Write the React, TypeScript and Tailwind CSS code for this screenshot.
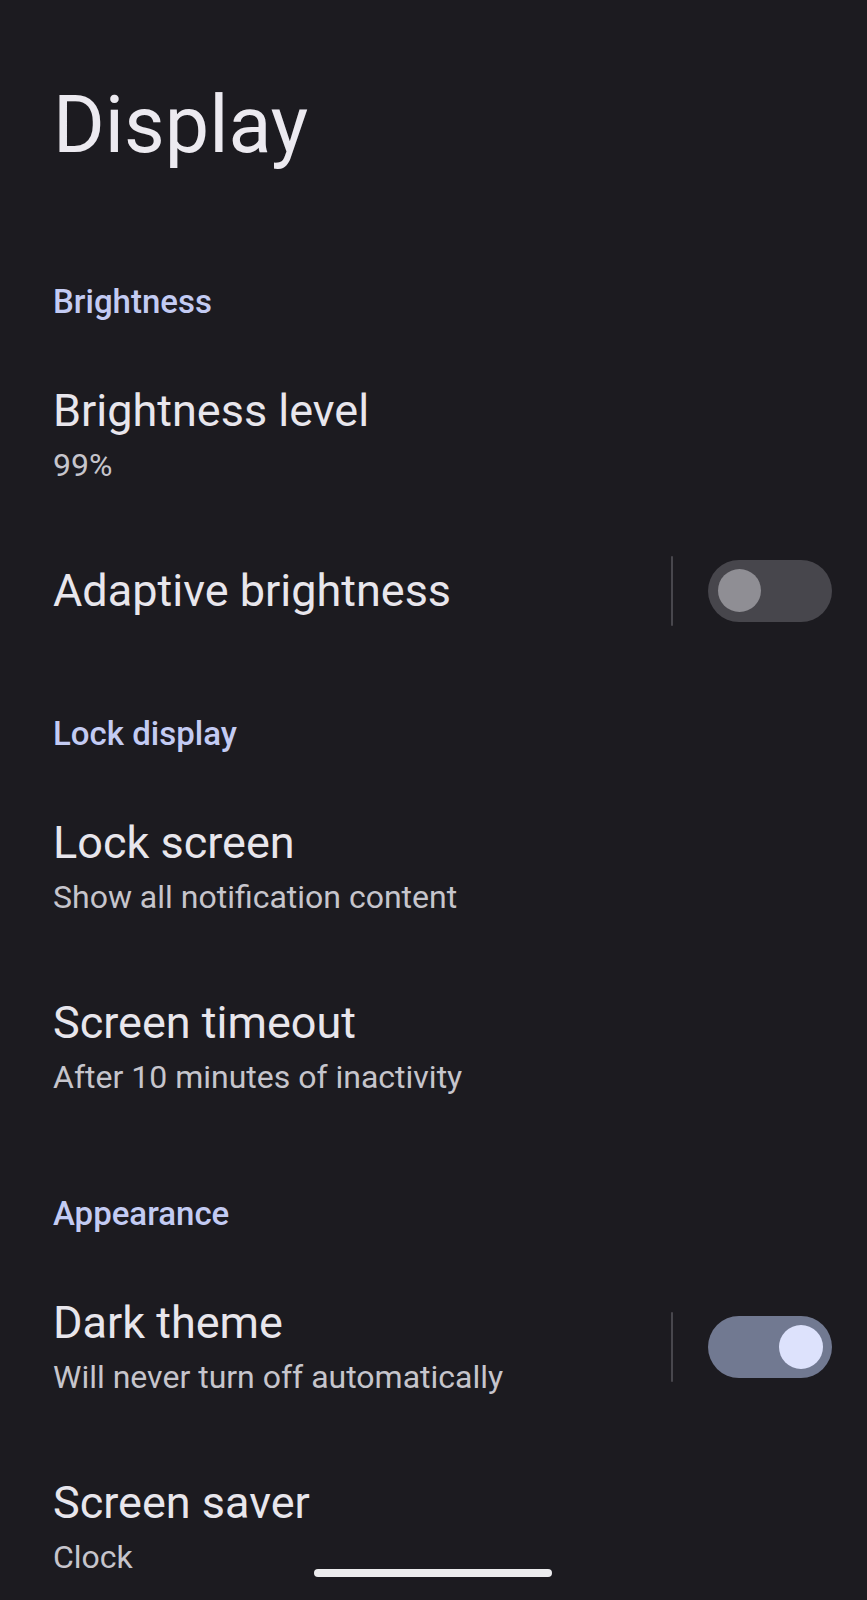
import React from "react";

const font = { fontFamily: "Roboto, 'Noto Sans', sans-serif" };

function Header({ children }: { children: React.ReactNode }) {
  return (
    <div className="pt-[60px] pb-[27px] pl-[53px]">
      <div className="text-[33px] leading-none font-medium text-[#c3cbf3]">{children}</div>
    </div>
  );
}

function Toggle({ on }: { on: boolean }) {
  return (
    <div className="flex items-center -my-[13px]">
      <div className="w-[2px] h-[70px] bg-[#48474d] rounded-full" />
      <div
        className={
          on
            ? "ml-[35px] w-[124px] h-[62px] rounded-full bg-[#717991] flex items-center justify-end pr-[9px]"
            : "ml-[35px] w-[124px] h-[62px] rounded-full bg-[#47464c] flex items-center justify-start pl-[10px]"
        }
      >
        <div
          className={
            on
              ? "w-[44px] h-[44px] rounded-full bg-[#dde2fc]"
              : "w-[43px] h-[43px] rounded-full bg-[#8f8e94]"
          }
        />
      </div>
    </div>
  );
}

function Row({
  title,
  subtitle,
  toggle,
}: {
  title: string;
  subtitle?: string;
  toggle?: boolean;
}) {
  return (
    <div className="flex items-center justify-between pt-[43px] pb-[44px] pl-[53px] pr-[35px]">
      <div className="flex flex-col">
        <div className="text-[45px] leading-none text-[#e8e6ec]">{title}</div>
        {subtitle && (
          <div className="mt-[16px] text-[32px] leading-none text-[#c6c5cc]">{subtitle}</div>
        )}
      </div>
      {toggle !== undefined && <Toggle on={toggle} />}
    </div>
  );
}

export default function App() {
  return (
    <div className="relative min-h-[1600px] h-[1600px] overflow-hidden bg-[#1c1b20]" style={font}>
      <div className="pt-[86px] pb-[60px] pl-[53px]">
        <h1 className="text-[79px] leading-none text-[#eceaf0]">Display</h1>
      </div>

      <Header>Brightness</Header>
      <Row title="Brightness level" subtitle="99%" />
      <Row title="Adaptive brightness" toggle={false} />

      <Header>Lock display</Header>
      <Row title="Lock screen" subtitle="Show all notification content" />
      <Row title="Screen timeout" subtitle="After 10 minutes of inactivity" />

      <Header>Appearance</Header>
      <Row title="Dark theme" subtitle="Will never turn off automatically" toggle={true} />
      <Row title="Screen saver" subtitle="Clock" />

      <div className="absolute left-[314px] top-[1569px] w-[238px] h-[8px] rounded-full bg-[#ececee]" />
    </div>
  );
}
